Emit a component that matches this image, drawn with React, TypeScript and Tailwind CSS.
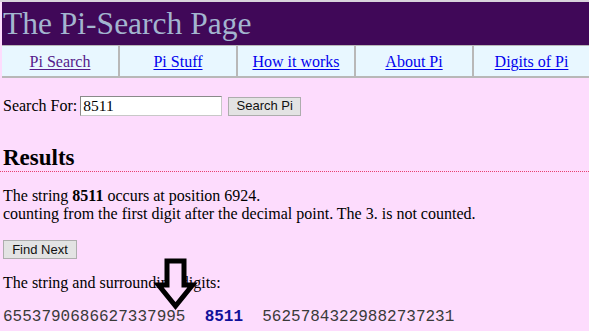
import React from "react";

const serif = { fontFamily: '"Liberation Serif", "Times New Roman", serif' };

export default function App() {
  const links = [
    { t: "Pi Search", visited: true },
    { t: "Pi Stuff" },
    { t: "How it works" },
    { t: "About Pi" },
    { t: "Digits of Pi" },
  ];
  return (
    <div className="relative w-[589px] h-[331px] overflow-hidden bg-[#fddcfd] text-black" style={serif}>
      {/* header */}
      <div className="h-[2px] bg-[#d9d4dc]" />
      <div className="ml-[2px] h-[43px] bg-[#400858] pt-[1px] pl-[1px]">
        <div className="text-[31.5px] leading-[42px] text-[#a3b5cf]" style={serif}>
          The Pi-Search Page
        </div>
      </div>
      {/* nav */}
      <div className="ml-[2px] flex h-[33px] border-t border-b-2 border-[#b8b8b8] bg-[#e8f7ff]">
        {links.map((l, i) => (
          <div
            key={l.t}
            className={
              i < 4
                ? "w-[118px] border-r-2 border-[#b8b8b8] text-center pt-[2px] text-[16px] leading-[28px]"
                : "flex-1 text-center pt-[2px] text-[16px] leading-[28px]"
            }
          >
            <a
              href="#"
              className={
                l.visited
                  ? "underline text-[#551a8b] underline-offset-2"
                  : "underline text-[#0000ee] underline-offset-2"
              }
            >
              {l.t}
            </a>
          </div>
        ))}
      </div>
      {/* search form */}
      <div className="mt-[18px] pl-[3px] flex items-center h-[20px] text-[16px] leading-[20px]">
        <span>Search For:</span>
        <div className="ml-[3px] w-[142px] h-[20px] bg-white border border-t-[#8a8a8a] border-l-[#8a8a8a] border-r-[#c8c8c8] border-b-[#c8c8c8] flex items-center pl-[2px] text-[15.5px]">
          8511
        </div>
        <div
          className="ml-[6px] w-[73px] h-[19px] bg-[#e3e3e3] border border-[#adadad] flex items-center justify-center text-[13px] text-[#111]"
          style={{ fontFamily: '"Liberation Sans", Arial, sans-serif' }}
        >
          Search Pi
        </div>
      </div>
      {/* results heading */}
      <div className="mt-[28px] pl-[3px] h-[28px] border-b border-dotted border-[#e8406f] text-[23px] leading-[27px] font-bold">
        Results
      </div>
      <div className="mt-[15px] pl-[3px] text-[16px] leading-[18px]">
        <div>
          The string <b>8511</b> occurs at position 6924.
        </div>
        <div>counting from the first digit after the decimal point. The 3. is not counted.</div>
      </div>
      <div className="mt-[17px] pl-[3px]">
        <div
          className="w-[74px] h-[19px] bg-[#e3e3e3] border border-[#adadad] flex items-center justify-center text-[13px] text-[#111]"
          style={{ fontFamily: '"Liberation Sans", Arial, sans-serif' }}
        >
          Find Next
        </div>
      </div>
      <div className="mt-[15px] pl-[3px] text-[16px] leading-[18px]">The string and surrounding digits:</div>
      <div
        className="mt-[16px] pl-[3px] text-[16px] leading-[18px] text-[#3a3a3a] whitespace-pre"
        style={{ fontFamily: '"Liberation Mono", "Courier New", monospace' }}
      >
        {"6553790686627337995  "}
        <b className="text-[#10109a]">8511</b>
        {"  56257843229882737231"}
      </div>
      {/* arrow overlay */}
      <svg className="absolute left-0 top-0 pointer-events-none" width="589" height="331">
        <path
          d="M167 261 L184 261 L184 285 L192.5 285 L175.5 306 L158.5 285 L167 285 Z"
          fill="#fddcfd"
          stroke="#000"
          strokeWidth="5"
          strokeLinejoin="miter"
        />
      </svg>
    </div>
  );
}
